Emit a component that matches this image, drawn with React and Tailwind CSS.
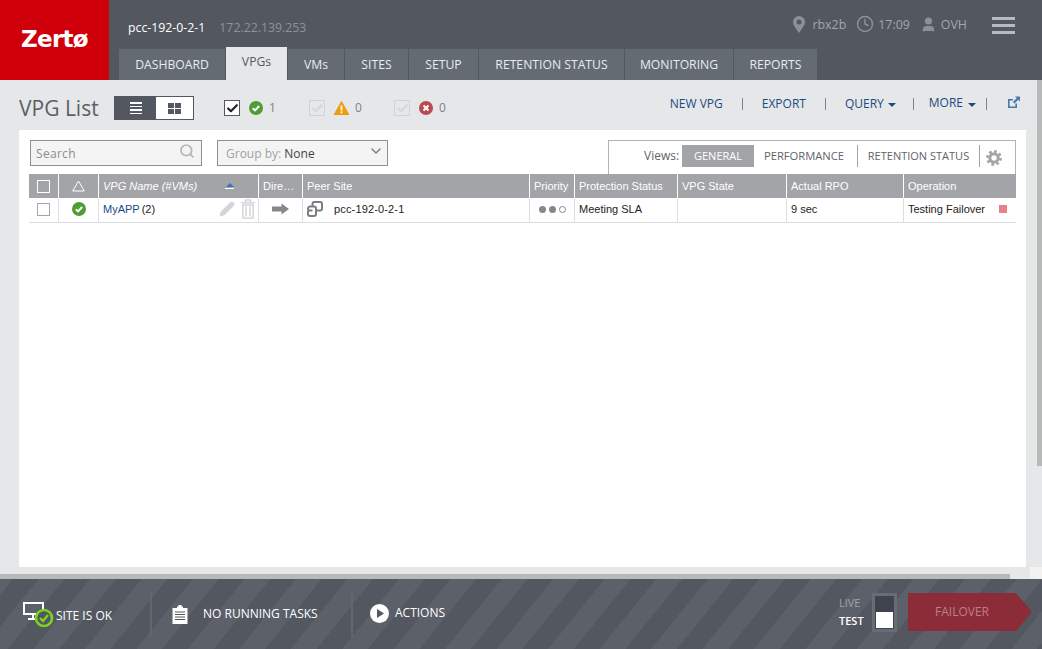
import React from "react";
import { Clock, User, Search, ChevronDown, Pencil, Check } from "lucide-react";

const tabs = [
  ["DASHBOARD", "w-[106px]"],
  ["VPGs", "w-[61px]"],
  ["VMs", "w-[56px]"],
  ["SITES", "w-[63px]"],
  ["SETUP", "w-[69px]"],
  ["RETENTION STATUS", "w-[145px]"],
  ["MONITORING", "w-[108px]"],
  ["REPORTS", "w-[83px]"],
];

const cols = [
  "w-[30px]", "w-[40px]", "w-[160px]", "w-[44px]", "w-[227px]", "w-[45px]", "w-[103px]", "w-[109px]", "w-[117px]", "w-[112px]",
];

function OkIcon({ size = 14 }) {
  return (
    <svg width={size} height={size} viewBox="0 0 14 14">
      <circle cx="7" cy="7" r="7" fill="#4f9d35" />
      <path d="M3.8 7.2 L6 9.4 L10.2 5" stroke="#fff" strokeWidth="2" fill="none" />
    </svg>
  );
}

function Box({ className = "" }) {
  return <span className={"block w-[13px] h-[13px] border border-[#a3a6a9] bg-white " + className} />;
}

function Head({ w, children, className = "" }) {
  return (
    <div className={"h-full shrink-0 flex items-center border-r border-white text-[11px] text-white px-1 " + w + " " + className}>
      {children}
    </div>
  );
}

function Cell({ w, children, className = "" }) {
  return (
    <div className={"h-full shrink-0 flex items-center border-r border-[#dddedf] text-[11px] text-[#222] px-1 pb-[2px] " + w + " " + className}>
      {children}
    </div>
  );
}

function Sep() {
  return <span className="block w-px h-[12px] bg-[#7d8388]" />;
}

export default function App() {
  return (
    <div className="w-[1042px] h-[649px] overflow-hidden flex flex-col bg-[#e6e7e9] font-['Open_Sans',sans-serif]">
      {/* Header */}
      <header className="h-[80px] shrink-0 flex bg-[#53575f]">
        <div className="w-[109px] shrink-0 bg-[#d0000a] flex items-center justify-center pb-[2px]">
          <span className="font-['DejaVu_Sans',sans-serif] font-bold text-[23px] tracking-[-0.7px] text-white">Zertø</span>
        </div>
        <div className="flex-1 flex flex-col">
          <div className="h-[47px] flex pl-[19px] pr-[27px] relative">
            <div className="flex items-start pt-[19px] gap-[14px] text-[12.3px] leading-[18px]">
              <span className="text-white">pcc-192-0-2-1</span>
              <span className="text-[#8e939a]">172.22.139.253</span>
            </div>
            <div className="ml-auto flex items-start pt-[16px] text-[12.4px] leading-[18px] text-[#a3a7ab]">
              <svg width="12" height="17" viewBox="0 0 12 17" className="mr-[7px]">
                <path fillRule="evenodd" d="M6 0 A6 6 0 0 1 12 6 C12 9.5 8 13.5 6 17 C4 13.5 0 9.5 0 6 A6 6 0 0 1 6 0 Z M6 3.5 A2.5 2.5 0 1 0 6 8.5 A2.5 2.5 0 1 0 6 3.5 Z" fill="#8d9196" />
              </svg>
              <span className="mr-[10px]">rbx2b</span>
              <Clock size={18} stroke="#8d9196" strokeWidth={2} className="mt-[-1px] mr-[4px]" />
              <span className="mr-[10px]">17:09</span>
              <User size={17} fill="#8d9196" stroke="#8d9196" className="mr-[4px]" />
              <span className="mr-[25px]">OVH</span>
              <div className="flex flex-col gap-[4px] mt-[1px]">
                <span className="block w-[23px] h-[3px] bg-[#b5bbc0]" />
                <span className="block w-[23px] h-[3px] bg-[#b5bbc0]" />
                <span className="block w-[23px] h-[3px] bg-[#b5bbc0]" />
              </div>
            </div>
          </div>
          <nav className="h-[33px] flex items-end gap-px pl-[10px]">
            {tabs.map(([t, w]) =>
              t === "VPGs" ? (
                <div key={t} className={"h-[33px] bg-[#e6e7e9] text-[#53575f] text-[12.2px] flex items-center justify-center pb-[2px] " + w}>{t}</div>
              ) : (
                <div key={t} className={"h-[31px] bg-[#646b73] text-[#e8ecef] text-[12.2px] flex items-center justify-center pt-[2px] " + w}>{t}</div>
              )
            )}
          </nav>
        </div>
      </header>

      {/* Main */}
      <main className="h-[499px] shrink-0 relative flex flex-col px-[19px] pr-[16px]">
        <div className="h-[50px] shrink-0 flex items-center pt-[6px]">
          <h1 className="w-[95px] text-[21px] leading-none text-[#5b5f65]">VPG List</h1>
          <div className="flex w-[80px] h-[24px] border border-[#53575f] bg-white">
            <div className="w-[41px] bg-[#53575f] flex flex-col items-center justify-center gap-[2px]">
              <span className="block w-[12px] h-[1.5px] bg-white" />
              <span className="block w-[12px] h-[1.5px] bg-white" />
              <span className="block w-[12px] h-[1.5px] bg-white" />
              <span className="block w-[12px] h-[1.5px] bg-white" />
            </div>
            <div className="flex-1 flex items-center justify-center">
              <div className="grid grid-cols-2 gap-px w-[13px] h-[11px]">
                <span className="bg-[#53575f]" /><span className="bg-[#53575f]" /><span className="bg-[#53575f]" /><span className="bg-[#53575f]" />
              </div>
            </div>
          </div>
          <div className="ml-[30px] flex items-center text-[12px] text-[#7d8186]">
            <span className="w-[16px] h-[16px] border border-[#53575f] bg-white flex items-center justify-center">
              <Check size={13} strokeWidth={4} className="text-[#222]" />
            </span>
            <span className="ml-[9px]"><OkIcon /></span>
            <span className="ml-[6px] w-[7px]">1</span>
            <span className="ml-[33px] w-[16px] h-[16px] border border-[#d2d3d5] flex items-center justify-center">
              <Check size={13} strokeWidth={4} className="text-[#d6d7d9]" />
            </span>
            <svg className="ml-[9px]" width="15" height="14" viewBox="0 0 15 14">
              <path d="M7.5 0.5 L14.8 13.5 L0.2 13.5 Z" fill="#ee9d0c" stroke="#ee9d0c" strokeLinejoin="round" />
              <rect x="6.6" y="4.5" width="1.8" height="5" fill="#fff" />
              <rect x="6.6" y="10.4" width="1.8" height="1.8" fill="#fff" />
            </svg>
            <span className="ml-[6px] w-[7px]">0</span>
            <span className="ml-[32px] w-[16px] h-[16px] border border-[#d2d3d5] flex items-center justify-center">
              <Check size={13} strokeWidth={4} className="text-[#d6d7d9]" />
            </span>
            <svg className="ml-[9px]" width="14" height="14" viewBox="0 0 14 14">
              <circle cx="7" cy="7" r="7" fill="#b94a4f" />
              <path d="M4.5 4.5 L9.5 9.5 M9.5 4.5 L4.5 9.5" stroke="#fff" strokeWidth="2" />
            </svg>
            <span className="ml-[6px]">0</span>
          </div>
          <div className="ml-auto flex items-center text-[12px] text-[#1b4b80] pr-[6px] mt-[-8px]">
            <span>NEW VPG</span>
            <span className="ml-[19px]"><Sep /></span>
            <span className="ml-[19px]">EXPORT</span>
            <span className="ml-[19px]"><Sep /></span>
            <span className="ml-[19px]">QUERY</span>
            <span className="ml-[4px] border-x-[4px] border-x-transparent border-t-[4px] border-t-[#1b4b80] mt-[2px]" />
            <span className="ml-[17px]"><Sep /></span>
            <span className="ml-[15px] mt-[-2px]">MORE</span>
            <span className="ml-[5px] border-x-[4px] border-x-transparent border-t-[4px] border-t-[#1b4b80] mt-[1px]" />
            <span className="ml-[10px]"><Sep /></span>
            <svg className="ml-[20px] mt-[-3px]" width="13" height="13" viewBox="0 0 13 13">
              <path d="M1 3 H6 V4.6 H2.6 V10.4 H8.4 V7.5 H10 V12 H1 Z" fill="#4a78a8" />
              <path d="M8 0.5 H13 V5.5 L11.3 3.8 L7.5 7.6 L5.9 6 L9.7 2.2 Z" fill="#4a78a8" />
            </svg>
          </div>
        </div>

        <section className="w-[1007px] h-[437px] shrink-0 bg-white flex flex-col pl-[10px]">
          <div className="h-[44px] shrink-0 flex items-start">
            <div className="ml-[1px] mt-[10px] w-[172px] h-[26px] border border-[#8d9196] bg-[#f4f4f4] flex items-center pl-[5px] pr-[6px] pt-[1px] text-[12px] text-[#8a8d91] tracking-[0.3px]">
              <span>Search</span>
              <Search size={16} strokeWidth={2.6} className="ml-auto mt-[-5px] text-[#b4b6b8]" />
            </div>
            <div className="ml-[15px] mt-[10px] w-[171px] h-[26px] border border-[#8d9196] bg-[#f4f4f4] flex items-center pl-[8px] pr-[3px] pt-[2px] text-[12px]">
              <span className="text-[#a0a3a6]">Group by:&nbsp;</span>
              <span className="text-[#444]">None</span>
              <ChevronDown size={16} strokeWidth={2} className="ml-auto mt-[-6px] text-[#77797d]" />
            </div>
            <div className="ml-auto mr-[10px] mt-[10px] w-[408px] h-[34px] border border-b-0 border-[#b0b2b5] flex items-start pt-[4px] pl-[35px] text-[11px] text-[#5f6367]">
              <span className="text-[12px] leading-[22px] w-[38px] shrink-0">Views:</span>
              <span className="w-[72px] h-[22px] bg-[#a2a4a8] text-white flex items-center justify-center">GENERAL</span>
              <span className="w-[104px] h-[22px] flex items-center justify-center border-r border-[#a2a4a8] pr-[3px] text-[11.2px]">PERFORMANCE</span>
              <span className="w-[122px] h-[22px] flex items-center justify-center border-r border-[#a2a4a8] shrink-0">RETENTION STATUS</span>
              <svg width="16" height="16" viewBox="0 0 16 16" className="ml-[6px] mt-[5px] shrink-0" fill="none" stroke="#a2a4a8">
                <circle cx="8" cy="8" r="4.2" strokeWidth="3" />
                <circle cx="8" cy="8" r="6.6" strokeWidth="2.6" strokeDasharray="2.6 2.58" />
              </svg>
            </div>
          </div>

          <div className="font-['Liberation_Sans',sans-serif] w-[987px]">
            <div className="h-[24px] flex bg-[#a2a4a8]">
              <Head w={cols[0]} className="justify-center">
                <span className="block w-[13px] h-[13px] border border-white" />
              </Head>
              <Head w={cols[1]} className="justify-center">
                <svg width="13" height="12" viewBox="0 0 13 12">
                  <path d="M6.5 1 L12.3 11 H0.7 Z" fill="none" stroke="#fff" strokeWidth="1" strokeLinejoin="round" />
                </svg>
              </Head>
              <Head w={cols[2]}>
                <span className="italic">VPG Name (#VMs)</span>
                <span className="ml-[28px] flex flex-col items-center gap-px">
                  <span className="border-x-[4px] border-x-transparent border-b-[4px] border-b-[#3e6fc4]" />
                  <span className="block w-[9px] h-px bg-white" />
                </span>
              </Head>
              <Head w={cols[3]}><span className="whitespace-nowrap">Dire…</span></Head>
              <Head w={cols[4]}>Peer Site</Head>
              <Head w={cols[5]}>Priority</Head>
              <Head w={cols[6]}>Protection Status</Head>
              <Head w={cols[7]}>VPG State</Head>
              <Head w={cols[8]}>Actual RPO</Head>
              <Head w={cols[9]} className="border-r-0">Operation</Head>
            </div>
            <div className="h-[25px] flex border-b border-[#dddedf]">
              <Cell w={cols[0]} className="justify-center"><Box /></Cell>
              <Cell w={cols[1]} className="justify-center"><OkIcon /></Cell>
              <Cell w={cols[2]}>
                <span className="text-[#1b4b80]">MyAPP</span>
                <span className="ml-[2px]">(2)</span>
                <Pencil size={16} fill="#d4d5d6" stroke="#d4d5d6" className="ml-auto" />
                <svg className="ml-[5px] mr-[-2px]" width="16" height="20" viewBox="0 0 16 20" fill="none" stroke="#d4d5d6" strokeWidth="1.5">
                  <path d="M1 3.8 H15 M5.5 3.8 V1 H10.5 V3.8" />
                  <path d="M2.8 6 H13.2 V19 H2.8 Z M6 7.5 V17.5 M10 7.5 V17.5" />
                </svg>
              </Cell>
              <Cell w={cols[3]} className="justify-center">
                <svg width="17" height="12" viewBox="0 0 17 12">
                  <path d="M0 3.5 H9.5 V0.5 L17 6 L9.5 11.5 V8.5 H0 Z" fill="#84878b" />
                </svg>
              </Cell>
              <Cell w={cols[4]}>
                <svg width="16" height="16" viewBox="0 0 16 16" fill="none" stroke="#7b7e82" strokeWidth="2">
                  <path d="M5.5 9.5 H3 A2 2 0 0 1 1 7.5 A2 2 0 0 1 3 5.5 H7 A2 2 0 0 1 9 7.5 V13 A2 2 0 0 1 7 15 H3 A2 2 0 0 1 1 13 V9.5" />
                  <path d="M5.5 5 V3 A2 2 0 0 1 7.5 1 H13 A2 2 0 0 1 15 3 V7.5 A2 2 0 0 1 13 9.5 H9" />
                </svg>
                <span className="ml-[11px] tracking-[0.15px]">pcc-192-0-2-1</span>
              </Cell>
              <Cell w={cols[5]} className="justify-center gap-[3px]">
                <span className="w-[7px] h-[7px] rounded-full bg-[#84878b]" />
                <span className="w-[7px] h-[7px] rounded-full bg-[#84878b]" />
                <span className="w-[7px] h-[7px] rounded-full border border-[#84878b]" />
              </Cell>
              <Cell w={cols[6]}>Meeting SLA</Cell>
              <Cell w={cols[7]} />
              <Cell w={cols[8]}>9 sec</Cell>
              <Cell w={cols[9]} className="border-r-0">
                <span>Testing Failover</span>
                <span className="ml-auto mr-[5px] w-[8px] h-[8px] bg-[#e8808a]" />
              </Cell>
            </div>
          </div>
        </section>

        {/* Scrollbars */}
        <span className="absolute right-0 top-0 w-[5px] h-[386px] bg-[#b8b9b9]" />
        <span className="absolute left-0 bottom-0 w-[1010px] h-[5px] bg-[#b8b9b9]" />
        <span className="absolute right-0 bottom-0 w-[12px] h-[12px] bg-[#f3f2f1]" />
      </main>

      {/* Footer */}
      <footer className="h-[70px] shrink-0 flex items-center text-[12px] text-white bg-[#53575f] bg-[repeating-linear-gradient(129deg,#5c6169_0px,#5c6169_10px,#53575f_10px,#53575f_30px,#5c6169_30px,#5c6169_40px)]">
        <div className="w-[152px] h-[45px] shrink-0 border-r-2 border-[#62666f] flex items-center pl-[23px]">
          <svg width="31" height="26" viewBox="0 0 31 26" className="shrink-0">
            <path d="M1 2 H20 V13 H1 Z" fill="none" stroke="#fff" strokeWidth="2" />
            <path d="M10 13 V17 M5 18 H12" stroke="#fff" strokeWidth="2" />
            <circle cx="21" cy="17" r="8" fill="#53575f" stroke="#7ed321" strokeWidth="2.6" />
            <path d="M17 17 L20 20 L25 14" fill="none" stroke="#7ed321" strokeWidth="2.4" />
          </svg>
          <span className="ml-[2px] mt-[4px]">SITE IS OK</span>
        </div>
        <div className="w-[201px] h-[45px] shrink-0 border-r-2 border-[#62666f] flex items-center pl-[20px]">
          <svg width="16" height="19" viewBox="0 0 16 19" className="shrink-0">
            <path d="M0.5 3 H5 V1.5 H6.5 V0 H9.5 V1.5 H11 V3 H15.5 V19 H0.5 Z" fill="#fff" />
            <path d="M3 7 H13 M3 9.5 H13 M3 12 H13 M3 14.5 H13" stroke="#53575f" strokeWidth="1" />
          </svg>
          <span className="ml-[15px]">NO RUNNING TASKS</span>
        </div>
        <div className="flex items-center pl-[17px] mt-[-2px]">
          <svg width="19" height="19" viewBox="0 0 19 19" className="shrink-0">
            <circle cx="9.5" cy="9.5" r="9.5" fill="#fff" />
            <path d="M7 5 L14 9.5 L7 14 Z" fill="#53575f" />
          </svg>
          <span className="ml-[6px]">ACTIONS</span>
        </div>
        <div className="ml-auto flex items-center pr-[10px] mt-[-4px]">
          <div className="flex flex-col items-start w-[25px] text-[11px] leading-[18px] mr-[8px]">
            <span className="text-[#9aa7ab]">LIVE</span>
            <span className="text-white font-semibold">TEST</span>
          </div>
          <div className="w-[25px] h-[39px] border-[3px] border-[#666d76] bg-[#3e434d] flex items-end justify-center p-[1px] pt-0 mr-[11px]">
            <span className="block w-full h-[16px] bg-white" />
          </div>
          <div className="w-[108px] h-[38px] bg-[#8c2c38] flex items-center justify-center text-[12px] text-[#b8808a]">
            FAILOVER
          </div>
          <span className="border-y-[19px] border-y-transparent border-l-[16px] border-l-[#8c2c38]" />
        </div>
      </footer>
    </div>
  );
}
